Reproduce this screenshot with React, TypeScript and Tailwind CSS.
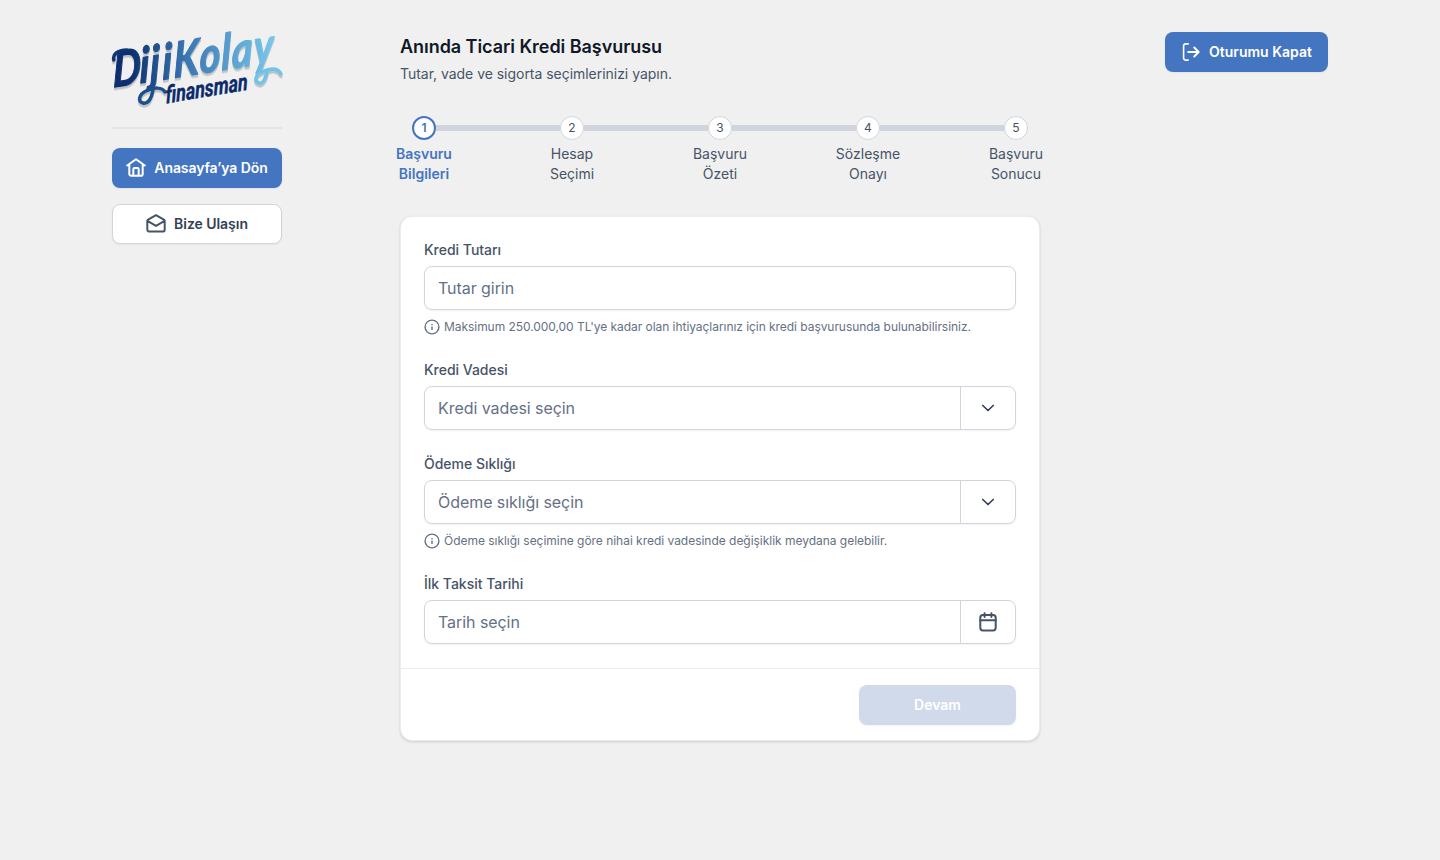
import type { ReactNode } from "react";

const steps = [
  ["Başvuru", "Bilgileri"],
  ["Hesap", "Seçimi"],
  ["Başvuru", "Özeti"],
  ["Sözleşme", "Onayı"],
  ["Başvuru", "Sonucu"],
];

function Logo() {
  return (
    <svg width="170" height="76" viewBox="0 0 170 76" className="block overflow-visible" aria-label="DijiKolay finansman">
      <defs>
        <linearGradient id="brand" x1="0" x2="205" y1="0" y2="0" gradientUnits="userSpaceOnUse">
          <stop offset="0.1" stopColor="#0b2f70" />
          <stop offset="0.45" stopColor="#3a78b4" />
          <stop offset="1" stopColor="#7bcdf0" />
        </linearGradient>
        <filter id="soft" x="-10%" y="-10%" width="120%" height="130%">
          <feDropShadow dx="0" dy="2.5" stdDeviation="0.4" floodColor="#8b9099" floodOpacity="0.5" />
        </filter>
      </defs>
      <g filter="url(#soft)">
        <text
          transform="translate(1 55.500) rotate(-9) skewX(-9) scale(0.82 1)"
          x="0 33 46 61 75 107 134 147 174"
          fill="url(#brand)"
          stroke="url(#brand)"
          strokeWidth="1.200"
          strokeLinejoin="round"
          className="font-['Lato'] text-[49px] font-bold italic"
        >
          DijiKolay
        </text>
        <path d="M41 58C39 69 35 72 31 71C26 70 26 63 34 59C42 55 50 55 53 60" fill="none" stroke="#1d4f8e" strokeWidth="3.500" strokeLinecap="round" />
        <path d="M155 40C153 49 150 52 147 51C142 49 143 43 150 40C159 36 166 36 169 42" fill="none" stroke="#72c3e8" strokeWidth="3.500" strokeLinecap="round" />
        <path d="M1.800 28C1 22 5 18.500 15 18" fill="none" stroke="#0d3474" strokeWidth="3.600" strokeLinecap="round" />
      </g>
      <text transform="translate(54 71.500) rotate(-9.5) skewX(-7)" textLength="83" lengthAdjust="spacingAndGlyphs" fill="#0b2a6b" stroke="#0b2a6b" strokeWidth="0.4" className="font-['Roboto'] text-[24px] font-bold italic">
        finansman
      </text>
    </svg>
  );
}

function HomeIcon() {
  return (
    <svg width="20" height="20" viewBox="0 0 20 20" fill="none" stroke="currentColor" strokeWidth="2" strokeLinecap="round" strokeLinejoin="round">
      <path d="M1.200 7.500 10 1.200l8.800 6.300M3.300 6.500v9.400a1.800 1.800 0 0 0 1.800 1.800h9.800a1.800 1.800 0 0 0 1.800-1.800V6.500M7.300 17.500v-6.200a1.300 1.300 0 0 1 1.300-1.300h2.800a1.300 1.300 0 0 1 1.300 1.300v6.200" />
    </svg>
  );
}

function MailIcon() {
  return (
    <svg width="20" height="20" viewBox="0 0 20 20" fill="none" stroke="#475467" strokeWidth="2" strokeLinecap="round" strokeLinejoin="round">
      <path d="M1.300 7v8.400a2.200 2.200 0 0 0 2.200 2.200h13a2.200 2.200 0 0 0 2.200-2.200V7c0-.600-.300-1.100-.800-1.400L10 1.200 2.100 5.600c-.500.300-.800.800-.800 1.400ZM1.800 7.100l8.200 4.800 8.200-4.800" />
    </svg>
  );
}

function LogoutIcon() {
  return (
    <svg width="20" height="20" viewBox="0 0 20 20" fill="none" stroke="currentColor" strokeLinecap="round" strokeLinejoin="round">
      <path d="M7.200 1.900H4.800a2.200 2.200 0 0 0-2.200 2.200v11.800a2.200 2.200 0 0 0 2.200 2.200h2.400" strokeWidth="1.600" />
      <path d="M7.200 10h10.300M13.200 5.500l4.500 4.500-4.500 4.500" strokeWidth="1.900" />
    </svg>
  );
}

function InfoIcon() {
  return (
    <svg width="16" height="16" viewBox="0 0 16 16" fill="none" stroke="#667085" className="shrink-0">
      <circle cx="8" cy="8" r="6.900" strokeWidth="1.400" />
      <path d="M8 7.400v3.500M8 5v1.200" strokeWidth="1.400" />
    </svg>
  );
}

function ChevronIcon() {
  return (
    <svg width="20" height="20" viewBox="0 0 20 20" fill="none" stroke="#344054" strokeWidth="1.700" strokeLinecap="round" strokeLinejoin="round">
      <path d="m4.800 7.500 5.200 5 5.200-5" />
    </svg>
  );
}

function CalendarIcon() {
  return (
    <svg width="20" height="20" viewBox="0 0 20 20" fill="none" stroke="#475467" strokeWidth="2" strokeLinecap="round" strokeLinejoin="round">
      <rect x="2.300" y="3" width="15.400" height="15.400" rx="2.600" />
      <path d="M2.300 8.300h15.400M6.600 1.200v3.700M13.400 1.200v3.700" />
    </svg>
  );
}

function Field({ label, placeholder, hint, icon }: { label: string; placeholder: string; hint?: ReactNode; icon?: ReactNode }) {
  return (
    <div>
      <div className="mb-1.5 text-sm font-medium tracking-[-0.02px] text-[#475467]">{label}</div>
      <div className="flex h-11 rounded-lg border border-[#d0d5dd] bg-white shadow-[0_1px_2px_rgba(16,24,40,0.05)]">
        <div className="flex flex-1 items-center px-[13px] text-base tracking-[-0.06px] text-[#667085]">{placeholder}</div>
        {icon && <div className="flex w-[55px] items-center justify-center border-l border-[#d0d5dd]">{icon}</div>}
      </div>
      {hint && (
        <div className="mt-2 flex h-[18px] items-center gap-1 text-xs text-[#667085]">
          <InfoIcon />
          {hint}
        </div>
      )}
    </div>
  );
}

export default function App() {
  return (
    <div className="flex min-h-screen items-start bg-[#f0f0f0] px-28 pt-8 font-['Inter',sans-serif] text-[#475467]">
      <aside className="w-[170px] shrink-0">
        <Logo />
        <div className="mt-[18.500px] h-0.5 bg-[#e4e4e6]" />
        <button className="mt-[19.500px] flex h-10 w-full items-center justify-center gap-2 rounded-lg bg-[#4475c0] text-sm font-semibold tracking-[-0.1px] text-white shadow-[0_1px_2px_rgba(16,24,40,0.05)]">
          <HomeIcon />
          Anasayfa’ya Dön
        </button>
        <button className="mt-4 flex h-10 w-full items-center justify-center gap-2 rounded-lg border border-[#d0d5dd] bg-white text-sm font-semibold tracking-[-0.04px] text-[#344054] shadow-[0_1px_2px_rgba(16,24,40,0.05)]">
          <MailIcon />
          Bize Ulaşın
        </button>
      </aside>

      <main className="ml-[118px] w-[640px] shrink-0">
        <h1 className="pt-px text-lg leading-7 font-semibold tracking-[-0.045px] text-[#101828]">Anında Ticari Kredi Başvurusu</h1>
        <p className="mt-[3px] text-sm tracking-[-0.03px] text-[#475467]">Tutar, vade ve sigorta seçimlerinizi yapın.</p>

        <div className="-mx-[50px] mt-8 flex">
          {steps.map((step, i) => (
            <div key={i} className="w-[148px] shrink-0 text-center text-sm">
              <div className="flex h-6 items-center">
                <div className={i === 0 ? "h-1.5 flex-1" : "h-1.5 flex-1 bg-[#d0d5dd]"} />
                <div
                  className={
                    i === 0
                      ? "flex size-6 items-center justify-center rounded-full border-2 border-[#4475c0] bg-white text-xs font-semibold text-[#4475c0]"
                      : "flex size-6 items-center justify-center rounded-full border border-[#d0d5dd] bg-white text-xs text-[#475467]"
                  }
                >
                  {i + 1}
                </div>
                <div className={i === 4 ? "h-1.5 flex-1" : "h-1.5 flex-1 bg-[#d0d5dd]"} />
              </div>
              <div className={i === 0 ? "mt-1 font-semibold text-[#4475c0]" : "mt-1"}>
                {step[0]}
                <br />
                {step[1]}
              </div>
            </div>
          ))}
        </div>

        <section className="mt-8 h-[525px] rounded-xl border border-[#eaecf0] bg-white shadow-[0_1px_3px_rgba(16,24,40,0.1),0_1px_2px_rgba(16,24,40,0.06)]">
          <div className="flex h-[452px] flex-col gap-6 border-b border-[#eaecf0] px-[23px] pt-[23px]">
            <Field
              label="Kredi Tutarı"
              placeholder="Tutar girin"
              hint={
                <span className="tracking-[-0.052px]">
                  Maksimum 250.000,00 TL'ye kadar olan ihtiyaçlarınız için kredi başvurusunda bulunabilirsiniz.
                </span>
              }
            />
            <Field label="Kredi Vadesi" placeholder="Kredi vadesi seçin" icon={<ChevronIcon />} />
            <Field
              label="Ödeme Sıklığı"
              placeholder="Ödeme sıklığı seçin"
              hint={
                <span className="tracking-[-0.026px]">
                  Ödeme sıklığı seçimine göre nihai kredi vadesinde değişiklik meydana gelebilir.
                </span>
              }
              icon={<ChevronIcon />}
            />
            <Field label="İlk Taksit Tarihi" placeholder="Tarih seçin" icon={<CalendarIcon />} />
          </div>
          <div className="flex justify-end px-[23px] pt-4">
            <button className="h-10 w-[157px] rounded-lg bg-[#d1daea] text-sm font-semibold text-white shadow-[0_1px_2px_rgba(16,24,40,0.05)]">
              Devam
            </button>
          </div>
        </section>
      </main>

      <button className="ml-auto flex h-10 w-[163px] shrink-0 items-center justify-center gap-2 rounded-lg bg-[#4475c0] text-sm font-semibold text-white shadow-[0_1px_2px_rgba(16,24,40,0.05)]">
        <LogoutIcon />
        Oturumu Kapat
      </button>
    </div>
  );
}
